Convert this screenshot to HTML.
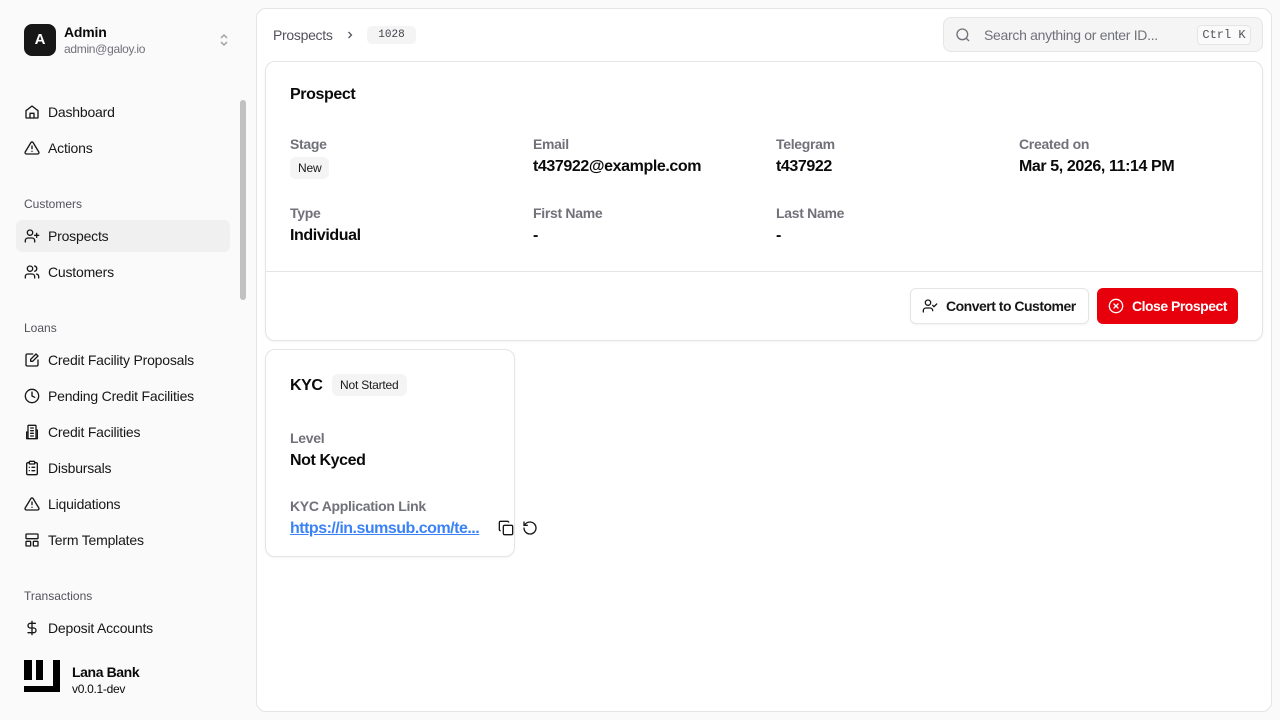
<!DOCTYPE html>
<html><head><meta charset="utf-8"><style>
*{box-sizing:border-box;margin:0;padding:0}
body{width:1280px;height:720px;overflow:hidden;background:#fafafa;font-family:"Liberation Sans",sans-serif;color:#0a0a0a;position:relative}
.abs{position:absolute}
.nav{position:absolute;left:16px;width:214px;height:32px;display:flex;align-items:center;padding-left:8px;font-size:14px;color:#171717;border-radius:6px;letter-spacing:-0.2px}
.nav svg{width:16px;height:16px;margin-right:8px;fill:none;stroke:#171717;stroke-width:2;stroke-linecap:round;stroke-linejoin:round}
.sec{position:absolute;left:24px;font-size:12px;color:#52525b}
.lbl{position:absolute;font-size:14px;color:#71717a;font-weight:bold;letter-spacing:-0.3px}
.val{position:absolute;font-size:16px;font-weight:bold;color:#0a0a0a;letter-spacing:-0.4px}
.card{position:absolute;background:#fff;border:1px solid #e5e5e5;border-radius:10px;box-shadow:0 1px 2px rgba(0,0,0,.05)}
.badge{position:absolute;background:#f4f4f5;border-radius:6px;font-size:12px;padding:0 8px;height:22px;line-height:22px;color:#18181b;letter-spacing:-0.2px}
</style></head><body>
<div class="abs" style="left:24px;top:24px;width:32px;height:32px;background:#171717;border-radius:8px;color:#fff;font-size:15px;font-weight:bold;text-align:center;line-height:32px">A</div>
<div class="abs" style="left:64px;top:24px;font-size:14px;font-weight:bold;letter-spacing:-0.2px">Admin</div>
<div class="abs" style="left:64px;top:42px;font-size:12px;color:#71717a;letter-spacing:-0.3px">admin@galoy.io</div>
<svg class="abs" style="left:217px;top:32px" width="14" height="16" viewBox="0 0 14 16" fill="none" stroke="#a1a1aa" stroke-width="1.5"><path d="M4 6l3-3 3 3M4 10l3 3 3-3"/></svg>
<div class="abs" style="left:240px;top:100px;width:6px;height:200px;background:#c1c1c1;border-radius:3px"></div>
<div class="nav" style="top:96px"><svg viewBox="0 0 24 24"><path d="M3 10l9-7 9 7v10a1 1 0 0 1-1 1H4a1 1 0 0 1-1-1z"/><path d="M9 21v-7h6v7"/></svg>Dashboard</div>
<div class="nav" style="top:132px"><svg viewBox="0 0 24 24"><path d="M10.3 3.9L1.8 18a2 2 0 0 0 1.7 3h17a2 2 0 0 0 1.7-3L13.7 3.9a2 2 0 0 0-3.4 0zM12 9v4M12 17h.01"/></svg>Actions</div>
<div class="sec" style="top:197px">Customers</div>
<div class="nav" style="top:220px;background:#f0f0f0"><svg viewBox="0 0 24 24"><circle cx="9" cy="7" r="4"/><path d="M2 21v-2a4 4 0 0 1 4-4h6a4 4 0 0 1 4 4v2M19 8v6M22 11h-6"/></svg>Prospects</div>
<div class="nav" style="top:256px"><svg viewBox="0 0 24 24"><circle cx="9" cy="7" r="4"/><path d="M2 21v-2a4 4 0 0 1 4-4h6a4 4 0 0 1 4 4v2M16 3.1a4 4 0 0 1 0 7.8M22 21v-2a4 4 0 0 0-3-3.9"/></svg>Customers</div>
<div class="sec" style="top:321px">Loans</div>
<div class="nav" style="top:344px"><svg viewBox="0 0 24 24"><path d="M13 3H5a2 2 0 0 0-2 2v14a2 2 0 0 0 2 2h14a2 2 0 0 0 2-2v-7"/><path d="M18 3l3 3-8 8h-3v-3z"/></svg>Credit Facility Proposals</div>
<div class="nav" style="top:380px"><svg viewBox="0 0 24 24"><circle cx="12" cy="12" r="10"/><path d="M12 6v6l4 2"/></svg>Pending Credit Facilities</div>
<div class="nav" style="top:416px"><svg viewBox="0 0 24 24"><rect x="6" y="2" width="12" height="20" rx="1"/><path d="M6 12H4v10h2M18 9h2v13h-2M10 6h4M10 10h4M10 14h4M10 18h4"/></svg>Credit Facilities</div>
<div class="nav" style="top:452px"><svg viewBox="0 0 24 24"><rect x="8" y="2" width="8" height="4" rx="1"/><path d="M16 4h2a2 2 0 0 1 2 2v14a2 2 0 0 1-2 2H6a2 2 0 0 1-2-2V6a2 2 0 0 1 2-2h2M12 11h4M12 16h4M8 11h.01M8 16h.01"/></svg>Disbursals</div>
<div class="nav" style="top:488px"><svg viewBox="0 0 24 24"><path d="M10.3 3.9L1.8 18a2 2 0 0 0 1.7 3h17a2 2 0 0 0 1.7-3L13.7 3.9a2 2 0 0 0-3.4 0zM12 9v4M12 17h.01"/></svg>Liquidations</div>
<div class="nav" style="top:524px"><svg viewBox="0 0 24 24"><rect x="3" y="3" width="18" height="7" rx="1"/><rect x="3" y="14" width="7" height="7" rx="1"/><rect x="14" y="14" width="7" height="7" rx="1"/></svg>Term Templates</div>
<div class="sec" style="top:589px">Transactions</div>
<div class="nav" style="top:612px"><svg viewBox="0 0 24 24"><path d="M12 2v20M17 5H9.5a3.5 3.5 0 0 0 0 7h5a3.5 3.5 0 0 1 0 7H6"/></svg>Deposit Accounts</div>
<svg class="abs" style="left:24px;top:660px" width="36" height="32" viewBox="0 0 36 32"><rect x="0" y="0" width="8" height="20" fill="#000"/><rect x="12" y="0" width="7" height="20" fill="#000"/><rect x="29" y="0" width="7" height="32" fill="#000"/><rect x="0" y="26" width="36" height="6" fill="#000"/></svg>
<div class="abs" style="left:72px;top:664px;font-size:14px;font-weight:bold;letter-spacing:-0.4px">Lana Bank</div>
<div class="abs" style="left:72px;top:682px;font-size:12px;letter-spacing:-0.3px">v0.0.1-dev</div>

<div class="abs" style="left:256px;top:8px;width:1016px;height:704px;background:#fff;border:1px solid #e5e5e5;border-radius:10px"></div>
<div class="abs" style="left:273px;top:27px;font-size:14px;color:#52525b;letter-spacing:-0.3px">Prospects</div>
<svg class="abs" style="left:344px;top:29px" width="12" height="12" viewBox="0 0 24 24" fill="none" stroke="#52525b" stroke-width="2.5"><path d="M9 6l6 6-6 6"/></svg>
<div class="abs" style="left:367px;top:26px;height:18px;width:49px;background:#f4f4f5;border-radius:5px;font-family:'Liberation Mono',monospace;font-size:11px;line-height:18px;text-align:center;color:#3f3f46">1028</div>
<div class="abs" style="left:943px;top:17px;width:320px;height:35px;background:#f5f5f5;border:1px solid #e5e5e5;border-radius:8px"></div>
<svg class="abs" style="left:955px;top:27px" width="16" height="16" viewBox="0 0 24 24" fill="none" stroke="#71717a" stroke-width="2"><circle cx="11" cy="11" r="8"/><path d="M21 21l-4.3-4.3"/></svg>
<div class="abs" style="left:984px;top:27px;font-size:14px;color:#71717a;letter-spacing:-0.3px">Search anything or enter ID...</div>
<div class="abs" style="left:1197px;top:25px;width:54px;height:20px;border:1px solid #e5e5e5;border-radius:4px;background:#fafafa;font-family:'Liberation Mono',monospace;font-size:12px;line-height:18px;text-align:center;color:#52525b">Ctrl K</div>

<div class="card" style="left:265px;top:61px;width:998px;height:280px"></div>
<div class="abs" style="left:290px;top:86px;font-size:16px;font-weight:bold;letter-spacing:-0.4px">Prospect</div>
<div class="lbl" style="left:290px;top:136px">Stage</div>
<div class="badge" style="left:290px;top:157px">New</div>
<div class="lbl" style="left:533px;top:136px">Email</div>
<div class="val" style="left:533px;top:158px">t437922@example.com</div>
<div class="lbl" style="left:776px;top:136px">Telegram</div>
<div class="val" style="left:776px;top:158px">t437922</div>
<div class="lbl" style="left:1019px;top:136px">Created on</div>
<div class="val" style="left:1019px;top:158px">Mar 5, 2026, 11:14 PM</div>
<div class="lbl" style="left:290px;top:205px">Type</div>
<div class="val" style="left:290px;top:227px">Individual</div>
<div class="lbl" style="left:533px;top:205px">First Name</div>
<div class="val" style="left:533px;top:227px">-</div>
<div class="lbl" style="left:776px;top:205px">Last Name</div>
<div class="val" style="left:776px;top:227px">-</div>
<div class="abs" style="left:266px;top:271px;width:996px;height:1px;background:#e5e5e5"></div>
<div class="abs" style="left:910px;top:288px;width:179px;height:36px;border:1px solid #e5e5e5;border-radius:6px;background:#fff;box-shadow:0 1px 2px rgba(0,0,0,.05)"></div>
<svg class="abs" style="left:922px;top:298px" width="16" height="16" viewBox="0 0 24 24" fill="none" stroke="#171717" stroke-width="2" stroke-linecap="round"><circle cx="9" cy="7" r="4"/><path d="M2 21v-2a4 4 0 0 1 4-4h6a4 4 0 0 1 4 4M16 11l2 2 4-4"/></svg>
<div class="abs" style="left:946px;top:298px;font-size:14px;font-weight:bold;color:#171717;letter-spacing:-0.5px">Convert to Customer</div>
<div class="abs" style="left:1097px;top:288px;width:141px;height:36px;border-radius:6px;background:#e7000b"></div>
<svg class="abs" style="left:1108px;top:298px" width="16" height="16" viewBox="0 0 24 24" fill="none" stroke="#fff" stroke-width="2" stroke-linecap="round"><circle cx="12" cy="12" r="10"/><path d="M15 9l-6 6M9 9l6 6"/></svg>
<div class="abs" style="left:1132px;top:298px;font-size:14px;font-weight:bold;color:#fff;letter-spacing:-0.5px">Close Prospect</div>

<div class="card" style="left:265px;top:349px;width:250px;height:208px"></div>
<div class="abs" style="left:290px;top:377px;font-size:16px;font-weight:bold;letter-spacing:-0.4px">KYC</div>
<div class="badge" style="left:332px;top:374px">Not Started</div>
<div class="lbl" style="left:290px;top:430px">Level</div>
<div class="val" style="left:290px;top:452px">Not Kyced</div>
<div class="lbl" style="left:290px;top:498px">KYC Application Link</div>
<div class="abs" style="left:290px;top:520px;font-size:16px;font-weight:bold;color:#3b82f6;text-decoration:underline;letter-spacing:-0.5px">https://in.sumsub.com/te...</div>
<svg class="abs" style="left:498px;top:520px" width="16" height="16" viewBox="0 0 24 24" fill="none" stroke="#171717" stroke-width="2"><rect x="8" y="8" width="14" height="14" rx="2"/><path d="M4 16a2 2 0 0 1-2-2V4a2 2 0 0 1 2-2h10a2 2 0 0 1 2 2"/></svg>
<svg class="abs" style="left:522px;top:520px" width="16" height="16" viewBox="0 0 24 24" fill="none" stroke="#171717" stroke-width="2" stroke-linecap="round"><path d="M3 12a9 9 0 1 0 9-9 9.75 9.75 0 0 0-6.74 2.74L3 8"/><path d="M3 3v5h5"/></svg>
</body></html>
